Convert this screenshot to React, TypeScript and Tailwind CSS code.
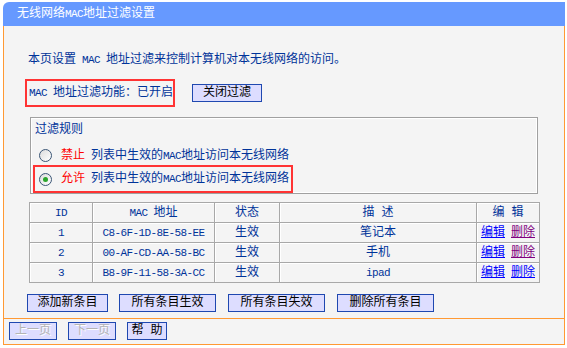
import React from 'react';

type Entry = { id: number; mac: string; status: string; desc: string; visited: boolean };

const entries: Entry[] = [
  { id: 1, mac: 'C8-6F-1D-8E-58-EE', status: '生效', desc: '笔记本', visited: true },
  { id: 2, mac: '00-AF-CD-AA-58-BC', status: '生效', desc: '手机', visited: true },
  { id: 3, mac: 'B8-9F-11-58-3A-CC', status: '生效', desc: 'ipad', visited: false },
];

const mono = "font-['Liberation_Mono','Noto_Sans_CJK_SC',monospace]";
const btn =
  'h-[18px] bg-[#ddddff] border border-[#1f48b0] text-[12px] leading-[16px] flex items-center justify-center whitespace-nowrap';
const cell = 'h-[20px] p-0 border-r border-b border-[#a8a8a8] shadow-[inset_1px_1px_0_#ffffff] text-center whitespace-nowrap';

// latin text at half-width, like the bitmap font of the original
const L = ({ children }: { children: React.ReactNode }) => (
  <span className="text-[11px] tracking-[-0.6px]">{children}</span>
);

const Radio = ({ checked }: { checked?: boolean }) => (
  <span className="w-[13px] h-[13px] rounded-full border border-[#3a5575] bg-gradient-to-br from-[#dcdcdc] to-white flex items-center justify-center shrink-0">
    {checked && <span className="w-[5px] h-[5px] rounded-full bg-[#2ba52b]" />}
  </span>
);

const App = () => {
  return (
    <div className={`w-[567px] h-[348px] bg-white pt-[2px] pl-[3px] text-[12px] ${mono}`}>
      <div className="w-[562px]">
        <div className="h-[24px] bg-[#6699ff] rounded-tl-[6px] text-white leading-[24px] pl-[14px] whitespace-nowrap">
          无线网络<L>MAC</L>地址过滤设置
        </div>

        <div className="border-x border-b border-[#ff9933] bg-[#f4f4f4]">
          <div className="pt-[26px] pb-[6px] border-b border-[#ff9933] text-[#003399]">
            <p className="leading-[16px] pl-[24px] whitespace-nowrap">
              本页设置<L> MAC </L>地址过滤来控制计算机对本无线网络的访问。
            </p>

            <div className="mt-[11px] flex items-center">
              <div className="ml-[21px] w-[150px] h-[28px] border-2 border-[#ff3333] pl-[2px] flex items-center leading-[16px] whitespace-nowrap">
                <span>
                  <L>MAC </L>地址过滤功能：已开启
                </span>
              </div>
              <button className={`${btn} text-black ml-[17px] w-[70px]`}>关闭过滤</button>
            </div>

            <div className="mt-[10px] ml-[26px] w-[508px] h-[77px] border border-[#a0a0a0] shadow-[inset_1px_1px_0_#ffffff,inset_-1px_-1px_0_#ffffff] pt-[4px]">
              <div className="leading-[16px] pl-[4px]">过滤规则</div>
              <div className="mt-[8px] h-[19px] pl-[8px] flex items-center leading-[16px] whitespace-nowrap">
                <Radio />
                <span className="ml-[9px] text-[#ff0000]">禁止</span>
                <span className="ml-[6px]">
                  列表中生效的<L>MAC</L>地址访问本无线网络
                </span>
              </div>
              <div className="ml-[2px] w-[260px] h-[28px] border-2 border-[#ff3333] pl-[4px] flex items-center leading-[16px] whitespace-nowrap">
                <Radio checked />
                <span className="ml-[9px] text-[#ff0000]">允许</span>
                <span className="ml-[6px]">
                  列表中生效的<L>MAC</L>地址访问本无线网络
                </span>
              </div>
            </div>

            <table className="mt-[8px] ml-[25px] w-[510px] table-fixed border-separate border-spacing-0 border-l border-t border-[#a8a8a8] leading-[16px]">
              <colgroup>
                <col className="w-[63px]" />
                <col className="w-[122px]" />
                <col className="w-[65px]" />
                <col className="w-[197px]" />
                <col className="w-[63px]" />
              </colgroup>
              <thead>
                <tr>
                  <th className={`${cell} font-normal`}>
                    <L>ID</L>
                  </th>
                  <th className={`${cell} font-normal`}>
                    <L>MAC </L>地址
                  </th>
                  <th className={`${cell} font-normal`}>状态</th>
                  <th className={`${cell} font-normal`}>描 述</th>
                  <th className={`${cell} font-normal`}>编 辑</th>
                </tr>
              </thead>
              <tbody>
                {entries.map((e) => (
                  <tr key={e.id}>
                    <td className={cell}>
                      <L>{e.id}</L>
                    </td>
                    <td className={cell}>
                      <L>{e.mac}</L>
                    </td>
                    <td className={cell}>{e.status}</td>
                    <td className={cell}>{e.desc === 'ipad' ? <L>{e.desc}</L> : e.desc}</td>
                    <td className={cell}>
                      <span className="text-[#0000ff] underline">编辑</span>
                      <span
                        className={`ml-[6px] underline ${e.visited ? 'text-[#800080]' : 'text-[#0000ff]'}`}
                      >
                        删除
                      </span>
                    </td>
                  </tr>
                ))}
              </tbody>
            </table>

            <div className="mt-[11px] ml-[23px] flex">
              <button className={`${btn} text-black w-[81px]`}>添加新条目</button>
              <button className={`${btn} text-black w-[97px] ml-[11px]`}>所有条目生效</button>
              <button className={`${btn} text-black w-[97px] ml-[12px]`}>所有条目失效</button>
              <button className={`${btn} text-black w-[97px] ml-[12px]`}>删除所有条目</button>
            </div>
          </div>

          <div className="pt-[3px] pb-[4px] pl-[5px] flex">
            <button className={`${btn} w-[48px] text-[#b4b4b4] [text-shadow:1px_1px_0_#ffffff]`}>上一页</button>
            <button className={`${btn} w-[48px] ml-[11px] text-[#b4b4b4] [text-shadow:1px_1px_0_#ffffff]`}>下一页</button>
            <button className={`${btn} text-black w-[40px] ml-[11px]`}>帮 助</button>
          </div>
        </div>
      </div>
    </div>
  );
};

export default App;
